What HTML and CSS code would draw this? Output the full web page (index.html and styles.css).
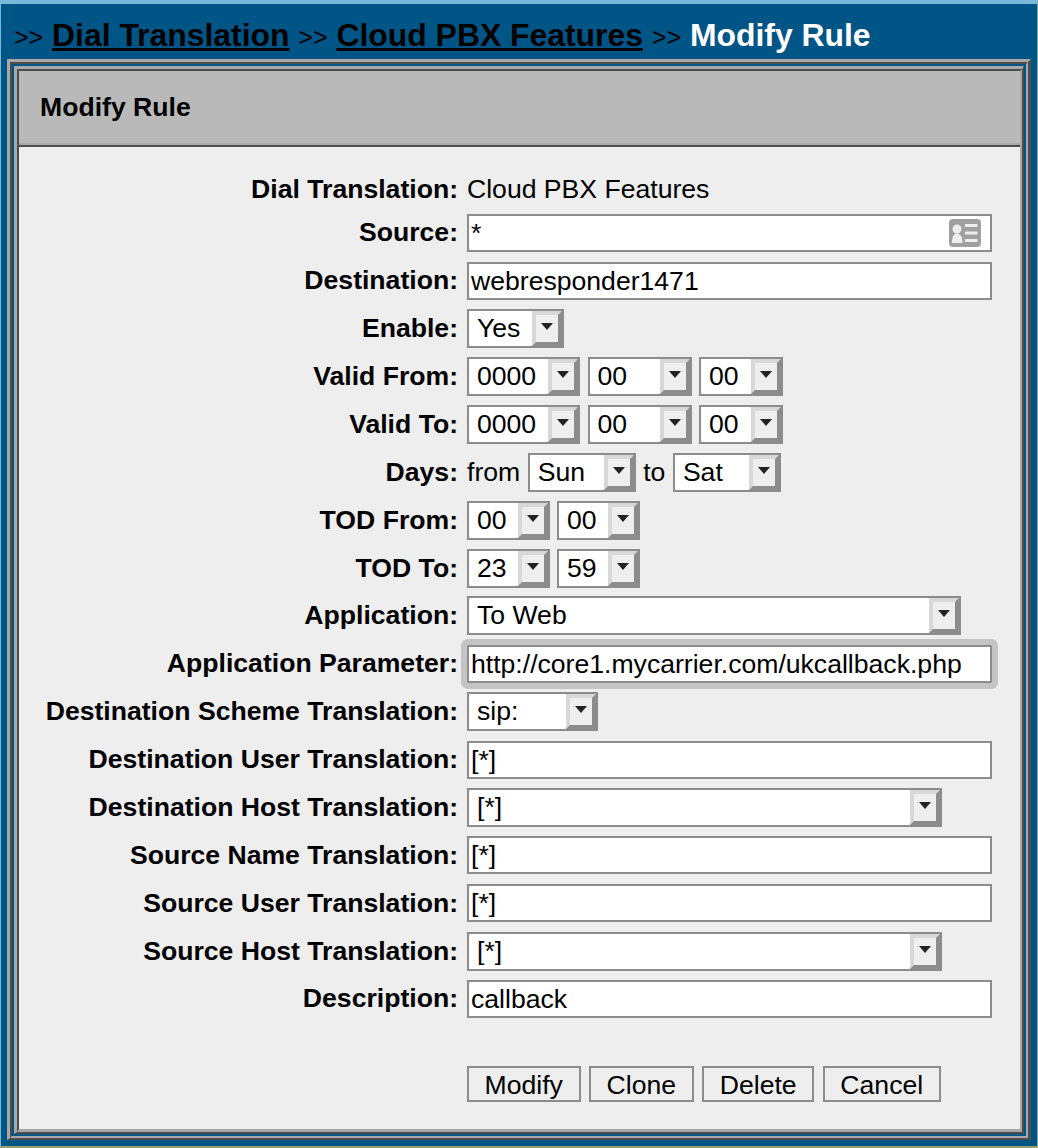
FILE: index.html
```html
<!DOCTYPE html>
<html>
  <head>
    <meta charset="utf-8" />
    <title>Modify Rule</title>
    <link rel="stylesheet" href="styles.css">
  </head>

  <body>
    <div class="page">
      <div class="crumbs">
        &gt;&gt; <a href="#">Dial Translation</a> &gt;&gt; <a href="#">Cloud PBX Features</a> &gt;&gt; <span class="current">Modify Rule</span>
      </div>
      <div class="frame-a">
        <div class="frame-b">
          <div class="frame-c">
            <div class="panel">
              <div class="panel-head">Modify Rule</div>
              <div class="panel-body">
                <form class="rows">
                  <div class="row row-text">
                    <label>Dial Translation:</label>
                    <div class="field">Cloud PBX Features</div>
                  </div>
                  <div class="row">
                    <label>Source:</label>
                    <div class="field">
                      <div class="input input-icon">
                        <span>*</span>
                        <svg class="card-icon" width="32" height="28" viewBox="0 0 32 28">
                          <rect width="32" height="28" rx="4" fill="#a0a0a0" />
                          <circle cx="8" cy="10" r="4.500" fill="#eee" />
                          <path d="M3 24c0-6 1.500-9.500 5-9.500s5.500 3.500 5.500 9.500z" fill="#eee" />
                          <path d="M16 5h12.500v3H16zM16 12.500h12.500v3H16zM16 20h12.500v3H16z" fill="#eee" />
                        </svg>
                      </div>
                    </div>
                  </div>
                  <div class="row">
                    <label>Destination:</label>
                    <div class="field"><div class="input">webresponder1471</div></div>
                  </div>
                  <div class="row">
                    <label>Enable:</label>
                    <div class="field">
                      <div class="select w-97"><span>Yes</span><b class="arrow"></b></div>
                    </div>
                  </div>
                  <div class="row">
                    <label>Valid From:</label>
                    <div class="field">
                      <div class="select w-113"><span>0000</span><b class="arrow"></b></div>
                      <div class="select w-104"><span>00</span><b class="arrow"></b></div>
                      <div class="select w-84"><span>00</span><b class="arrow"></b></div>
                    </div>
                  </div>
                  <div class="row">
                    <label>Valid To:</label>
                    <div class="field">
                      <div class="select w-113"><span>0000</span><b class="arrow"></b></div>
                      <div class="select w-104"><span>00</span><b class="arrow"></b></div>
                      <div class="select w-84"><span>00</span><b class="arrow"></b></div>
                    </div>
                  </div>
                  <div class="row">
                    <label>Days:</label>
                    <div class="field field-days">
                      from
                      <div class="select w-108"><span>Sun</span><b class="arrow"></b></div>
                      to
                      <div class="select w-108"><span>Sat</span><b class="arrow"></b></div>
                    </div>
                  </div>
                  <div class="row">
                    <label>TOD From:</label>
                    <div class="field">
                      <div class="select w-82"><span>00</span><b class="arrow"></b></div>
                      <div class="select w-82"><span>00</span><b class="arrow"></b></div>
                    </div>
                  </div>
                  <div class="row">
                    <label>TOD To:</label>
                    <div class="field">
                      <div class="select w-82"><span>23</span><b class="arrow"></b></div>
                      <div class="select w-82"><span>59</span><b class="arrow"></b></div>
                    </div>
                  </div>
                  <div class="row">
                    <label>Application:</label>
                    <div class="field">
                      <div class="select w-494"><span>To Web</span><b class="arrow"></b></div>
                    </div>
                  </div>
                  <div class="row">
                    <label>Application Parameter:</label>
                    <div class="field"><div class="input input-focus">http://core1.mycarrier.com/ukcallback.php</div></div>
                  </div>
                  <div class="row">
                    <label>Destination Scheme Translation:</label>
                    <div class="field">
                      <div class="select w-131"><span>sip:</span><b class="arrow"></b></div>
                    </div>
                  </div>
                  <div class="row">
                    <label>Destination User Translation:</label>
                    <div class="field"><div class="input">[*]</div></div>
                  </div>
                  <div class="row">
                    <label>Destination Host Translation:</label>
                    <div class="field">
                      <div class="select w-475"><span>[*]</span><b class="arrow"></b></div>
                    </div>
                  </div>
                  <div class="row">
                    <label>Source Name Translation:</label>
                    <div class="field"><div class="input">[*]</div></div>
                  </div>
                  <div class="row">
                    <label>Source User Translation:</label>
                    <div class="field"><div class="input">[*]</div></div>
                  </div>
                  <div class="row">
                    <label>Source Host Translation:</label>
                    <div class="field">
                      <div class="select w-475"><span>[*]</span><b class="arrow"></b></div>
                    </div>
                  </div>
                  <div class="row">
                    <label>Description:</label>
                    <div class="field"><div class="input">callback</div></div>
                  </div>
                </form>
                <div class="buttons">
                  <button type="button">Modify</button>
                  <button type="button">Clone</button>
                  <button type="button">Delete</button>
                  <button type="button">Cancel</button>
                </div>
              </div>
            </div>
          </div>
        </div>
      </div>
    </div>
  </body>
</html>
```

FILE: styles.css
```css
* {
  margin: 0;
  padding: 0;
  box-sizing: border-box;
}

body {
  font-family: "Liberation Sans", Arial, sans-serif;
  font-size: 26.6px;
  color: #000;
  background-color: #005587;
}

.page {
  height: 1148px;
  padding: 0 6px 6px 6px;
  border-top: 4px solid #7ab8dc;
  border-left: 1px solid #7ab8dc;
  border-right: 1px solid #8fae8e;
  border-bottom: 2px solid #9aa06a;
  display: flex;
  flex-direction: column;
}

.crumbs {
  height: 55px;
  padding: 12px 0 0 7px;
  font-size: 25px;
  line-height: 38px;
  word-spacing: 1.9px;
  white-space: nowrap;
}

.crumbs a {
  font-size: 31.9px;
  font-weight: bold;
  word-spacing: 0;
  color: #000;
}

.crumbs .current {
  font-size: 31.9px;
  font-weight: bold;
  word-spacing: 0;
  color: #fff;
}

/* the frame is two pairs of raised + sunken edges with blue between */
.frame-a {
  flex: 1;
  display: flex;
  border-style: solid;
  border-width: 3px 3px 2px 3px;
  border-color: #a8a8a8 #4d4d4d #4d4d4d #a8a8a8;
}

.frame-b {
  flex: 1;
  display: flex;
  padding: 2px;
  border: 2px solid;
  border-color: #4d4d4d #a8a8a8 #a8a8a8 #4d4d4d;
}

.frame-c {
  flex: 1;
  display: flex;
  border-style: solid;
  border-width: 3px 2px 2px 3px;
  border-color: #a8a8a8 #4d4d4d #4d4d4d #a8a8a8;
}

.panel {
  flex: 1;
  display: flex;
  flex-direction: column;
  background-color: #eee;
  border-style: solid;
  border-width: 2px 2px 3px 2px;
  border-color: #4d4d4d #a8a8a8 #a8a8a8 #4d4d4d;
}

.panel-head {
  height: 76px;
  padding-left: 21px;
  line-height: 72px;
  font-weight: bold;
  background-color: #b9b9b9;
  border-bottom: 2px solid #4d4d4d;
  box-shadow: inset 0 -2px 0 #a8a8a8;
}

.panel-body {
  flex: 1;
  padding-top: 22px;
}

.row {
  display: flex;
  align-items: center;
  height: 47.875px;
}

.row-text {
  height: 40px;
}

.row label {
  width: 439px;
  text-align: right;
  font-weight: bold;
  white-space: nowrap;
}

.field {
  margin-left: 9px;
  display: flex;
  align-items: center;
  gap: 7.5px;
}

.input {
  width: 525px;
  height: 38px;
  padding-left: 2px;
  line-height: 34px;
  background-color: #fff;
  border: 2px solid #8c8c8c;
  white-space: nowrap;
}

.input-icon {
  display: flex;
  justify-content: space-between;
  align-items: center;
  padding-right: 9px;
}

.input-focus {
  outline: 6px solid #c4c4c4;
  border-radius: 1px;
}

.select {
  height: 39px;
  display: flex;
  background-color: #fff;
  border: 2px solid #8c8c8c;
}

.select span {
  flex: 1;
  padding-left: 8px;
  line-height: 35px;
  white-space: nowrap;
}

.arrow {
  position: relative;
  width: 30px;
  background-color: #eee;
  border: 4px solid;
  border-color: #d8d8d8 #8c8c8c #8c8c8c #d8d8d8;
}

.arrow::after {
  content: "";
  position: absolute;
  top: 8px;
  left: 5px;
  border: 6px solid transparent;
  border-top: 7px solid #222;
  border-bottom: 0;
}

.w-82 { width: 82.500px; }
.w-84 { width: 84px; }
.w-97 { width: 97px; }
.w-104 { width: 104px; }
.w-108 { width: 108px; }
.w-113 { width: 113px; }
.w-131 { width: 131px; }
.w-475 { width: 475px; }
.w-494 { width: 494px; }

.buttons {
  margin: 43px 0 0 448px;
  display: flex;
  gap: 8.5px;
}

.buttons button {
  height: 36px;
  padding: 1px 15.6px 0;
  font-family: inherit;
  font-size: 26.6px;
  line-height: 32px;
  color: #000;
  background-color: #eee;
  border: 2px solid #8c8c8c;
}
```
